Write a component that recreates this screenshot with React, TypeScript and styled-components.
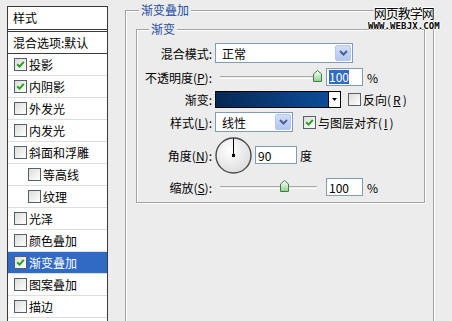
import styled, { createGlobalStyle } from 'styled-components';

const GlobalStyle = createGlobalStyle`
  html, body {
    margin: 0;
    padding: 0;
  }
  body {
    width: 452px;
    height: 321px;
    overflow: hidden;
    background: #ececec;
    font-family: "Noto Sans CJK SC", "Liberation Sans", sans-serif;
    font-size: 12px;
    color: #000;
  }
`;

const Dialog = styled.div`
  position: relative;
  display: flex;
  align-items: flex-start;
  width: 452px;
  height: 321px;
  overflow: hidden;
`;

/* ---------- left: style list ---------- */

const StyleList = styled.div`
  flex: none;
  box-sizing: border-box;
  width: 101px;
  height: 340px;
  margin: 6px 0 0 7px;
  border: 1px solid #3a3a3a;
  background: #fff;
`;

const ListHeader = styled.div`
  height: 22px;
  line-height: 22px;
  padding-left: 5px;
  border-bottom: 3px double #3a3a3a;
`;

const BlendRow = styled.div`
  height: 21px;
  line-height: 21px;
  padding-left: 5px;
  border-bottom: 1px solid #3a3a3a;
`;

const LayerRow = styled.div<{ $indent?: boolean; $active?: boolean }>`
  display: flex;
  align-items: center;
  gap: 2px;
  height: 21px;
  padding-left: ${({ $indent }) => ($indent ? 20 : 6)}px;
  border-bottom: 1px solid #dedede;
  background: ${({ $active }) => ($active ? '#316ac5' : 'transparent')};
  color: ${({ $active }) => ($active ? '#fff' : '#000')};
  white-space: nowrap;
`;

const Box = styled.span`
  flex: none;
  display: inline-flex;
  align-items: center;
  justify-content: center;
  box-sizing: border-box;
  width: 13px;
  height: 13px;
  border: 1px solid #56606c;
  background: linear-gradient(135deg, #dcdcd7, #ffffff);
`;

const CheckBox = ({ checked }: { checked?: boolean }) => (
  <Box>
    {checked && (
      <svg width="9" height="9" viewBox="0 0 9 9">
        <path d="M1.2 4.2 L3.6 6.6 L7.8 1.8" fill="none" stroke="#21a121" strokeWidth="2" />
      </svg>
    )}
  </Box>
);

/* ---------- right: group boxes ---------- */

const GroupBox = styled.fieldset<{ $outer?: boolean }>`
  box-sizing: border-box;
  min-width: 0;
  margin: ${({ $outer }) => ($outer ? '3px 0 0 17px' : '0')};
  width: ${({ $outer }) => ($outer ? '309px' : 'auto')};
  height: ${({ $outer }) => ($outer ? '340px' : 'auto')};
  padding: ${({ $outer }) => ($outer ? '5px 8px 0 10px' : '6px 0 2px 0')};
  border: 1px solid #a3a3a3;
  box-shadow: inset 1px 1px 0 #fff, 1px 1px 0 #fff;
`;

const Legend = styled.legend<{ $offset: number }>`
  margin-left: ${({ $offset }) => $offset}px;
  padding: 0 2px;
  line-height: 14px;
  color: #1f4ea3;
  background: #ececec;
`;

const Form = styled.div`
  display: grid;
  grid-template-columns: 75px 1fr;
  grid-template-rows: 22px 26px 18px 28px 38px 26px;
  column-gap: 3px;
  align-items: center;
`;

const Label = styled.div`
  text-align: right;
  white-space: nowrap;
`;

const Controls = styled.div`
  display: flex;
  align-items: center;
  white-space: nowrap;
`;

const Select = styled.div<{ $width: number }>`
  display: flex;
  align-items: center;
  justify-content: space-between;
  box-sizing: border-box;
  width: ${({ $width }) => $width}px;
  height: 20px;
  padding: 0 1px 0 6px;
  border: 1px solid #7f9db9;
  background: #fff;
`;

const DropButton = styled.span`
  display: flex;
  align-items: center;
  justify-content: center;
  box-sizing: border-box;
  width: 16px;
  height: 16px;
  border: 1px solid #b6c9f4;
  border-radius: 2px;
  background: linear-gradient(#cfdcfd, #b3c7f4);
`;

const Chevron = () => (
  <svg width="9" height="6" viewBox="0 0 9 6">
    <path d="M1 1 L4.5 4.5 L8 1" fill="none" stroke="#4d6185" strokeWidth="2" />
  </svg>
);

const SliderWrap = styled.div`
  position: relative;
  flex: none;
  width: 101px;
  height: 14px;
  margin-left: 5px;
`;

const Track = styled.div`
  position: absolute;
  left: 0;
  top: 6px;
  width: 97px;
  height: 1px;
  border-top: 1px solid #a8a8a8;
  border-bottom: 1px solid #fff;
  border-radius: 1px;
`;

const Thumb = styled.svg`
  position: absolute;
  top: 0;
`;

const Slider = ({ value }: { value: number }) => (
  <SliderWrap>
    <Track />
    <Thumb width="9" height="12" viewBox="0 0 9 12" style={{ left: Math.round(value * 93) }}>
      <defs>
        <linearGradient id="thumbFill" x1="0" y1="0" x2="0" y2="1">
          <stop offset="0" stopColor="#ffffff" />
          <stop offset="1" stopColor="#8fcf8f" />
        </linearGradient>
      </defs>
      <path d="M0.5 4 L4.5 0.5 L8.5 4 L8.5 11.5 L0.5 11.5 Z" fill="url(#thumbFill)" stroke="#3f7f45" />
    </Thumb>
  </SliderWrap>
);

const NumberBox = styled.div<{ $width: number; $gap: number }>`
  display: flex;
  align-items: center;
  box-sizing: border-box;
  width: ${({ $width }) => $width}px;
  height: 18px;
  margin-left: ${({ $gap }) => $gap}px;
  padding-left: 2px;
  border: 1px solid #7f9db9;
  background: #fff;
`;

const Highlight = styled.span`
  background: #316ac5;
  color: #fff;
  line-height: 14px;
`;

const Unit = styled.span<{ $gap: number }>`
  margin-left: ${({ $gap }) => $gap}px;
`;

const GradientPicker = styled.div`
  display: flex;
  box-sizing: border-box;
  width: 126px;
  height: 17px;
  border: 1px solid #000;
`;

const GradientBar = styled.div`
  flex: 1;
  border-right: 1px solid #000;
  background: linear-gradient(to right, #072856, #0c4c97);
`;

const GradientArrow = styled.div`
  display: flex;
  align-items: center;
  justify-content: center;
  width: 11px;
  background: #fff;
`;

const Option = styled.span<{ $gap: number }>`
  display: flex;
  align-items: center;
  gap: 2px;
  margin-left: ${({ $gap }) => $gap}px;
`;

const Dial = styled.svg`
  flex: none;
`;

/* ---------- watermark ---------- */

const Watermark = styled.div`
  position: absolute;
  left: 368px;
  top: 4px;
  text-align: center;
  text-shadow: 1px 0 0 #fff, -1px 0 0 #fff, 0 1px 0 #fff, 0 -1px 0 #fff;
`;

const MarkTitle = styled.div`
  font-size: 13px;
  line-height: 17px;
  letter-spacing: -1px;
`;

const MarkUrl = styled.div`
  font-family: "DejaVu Sans Mono", monospace;
  font-weight: bold;
  font-size: 9px;
  line-height: 10px;
  letter-spacing: 0.1px;
`;

const layers = [
  { name: '投影', checked: true },
  { name: '内阴影', checked: true },
  { name: '外发光' },
  { name: '内发光' },
  { name: '斜面和浮雕' },
  { name: '等高线', indent: true },
  { name: '纹理', indent: true },
  { name: '光泽' },
  { name: '颜色叠加' },
  { name: '渐变叠加', checked: true, active: true },
  { name: '图案叠加' },
  { name: '描边' },
  { name: '' },
];

export default function App() {
  return (
    <>
      <GlobalStyle />
      <Dialog>
        <StyleList>
          <ListHeader>样式</ListHeader>
          <BlendRow>混合选项:默认</BlendRow>
          {layers.map((layer, i) => (
            <LayerRow key={i} $indent={layer.indent} $active={layer.active}>
              {layer.name && <CheckBox checked={layer.checked} />}
              {layer.name}
            </LayerRow>
          ))}
        </StyleList>

        <GroupBox $outer>
          <Legend $offset={3}>渐变叠加</Legend>
          <GroupBox>
            <Legend $offset={12}>渐变</Legend>
            <Form>
              <Label>混合模式:</Label>
              <Controls>
                <Select $width={138}>
                  正常
                  <DropButton>
                    <Chevron />
                  </DropButton>
                </Select>
              </Controls>

              <Label>
                不透明度(<u>P</u>):
              </Label>
              <Controls>
                <Slider value={1} />
                <NumberBox $width={37} $gap={5}>
                  <Highlight>100</Highlight>
                </NumberBox>
                <Unit $gap={4}>%</Unit>
              </Controls>

              <Label>渐变:</Label>
              <Controls>
                <GradientPicker>
                  <GradientBar />
                  <GradientArrow>
                    <svg width="5" height="3" viewBox="0 0 5 3">
                      <path d="M0 0 H5 L2.5 3 Z" fill="#000" />
                    </svg>
                  </GradientArrow>
                </GradientPicker>
                <Option $gap={7}>
                  <CheckBox />
                  反向(<u>R</u>)
                </Option>
              </Controls>

              <Label>
                样式(<u>L</u>):
              </Label>
              <Controls>
                <Select $width={78}>
                  线性
                  <DropButton>
                    <Chevron />
                  </DropButton>
                </Select>
                <Option $gap={10}>
                  <CheckBox checked />
                  与图层对齐(<u>I</u>)
                </Option>
              </Controls>

              <Label>
                角度(<u>N</u>):
              </Label>
              <Controls>
                <Dial width="37" height="37" viewBox="0 0 37 37">
                  <defs>
                    <radialGradient id="dialFill" cx="0.4" cy="0.35" r="0.7">
                      <stop offset="0" stopColor="#ffffff" />
                      <stop offset="1" stopColor="#dcdcdc" />
                    </radialGradient>
                  </defs>
                  <circle cx="18.5" cy="18.5" r="17.5" fill="url(#dialFill)" stroke="#4a4a4a" strokeWidth="1.4" />
                  <line x1="18.5" y1="18.5" x2="18.5" y2="1.5" stroke="#000" strokeWidth="1" />
                  <rect x="17" y="17" width="3" height="3" fill="#000" />
                </Dial>
                <NumberBox $width={42} $gap={3}>90</NumberBox>
                <Unit $gap={3}>度</Unit>
              </Controls>

              <Label>
                缩放(<u>S</u>):
              </Label>
              <Controls>
                <Slider value={(100 - 10) / 140} />
                <NumberBox $width={37} $gap={5}>100</NumberBox>
                <Unit $gap={4}>%</Unit>
              </Controls>
            </Form>
          </GroupBox>
        </GroupBox>

        <Watermark>
          <MarkTitle>网页教学网</MarkTitle>
          <MarkUrl>WWW.WEBJX.COM</MarkUrl>
        </Watermark>
      </Dialog>
    </>
  );
}
